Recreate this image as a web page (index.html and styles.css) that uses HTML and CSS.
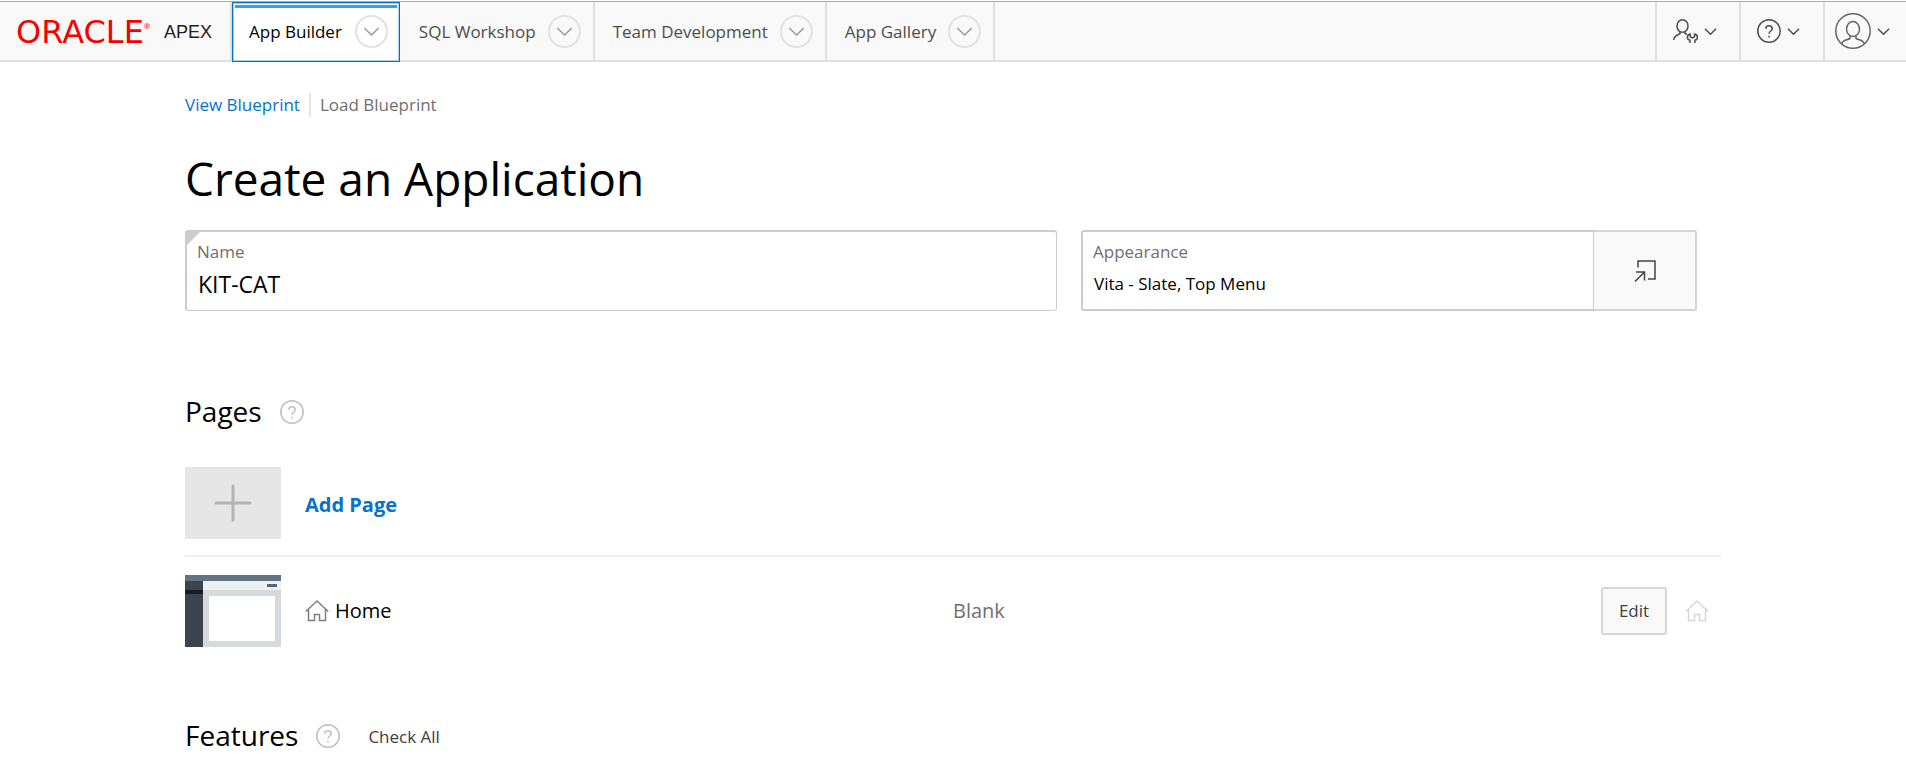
FILE: index.html
```html
<!DOCTYPE html>
<html lang="en">
<head>
<meta charset="utf-8">
<title>Create an Application</title>
<link rel="stylesheet" href="styles.css">
</head>
<body>
<svg class="sprite" aria-hidden="true">
  <symbol id="chevron" viewBox="0 0 18 10"><path d="M1 1l8 8 8-8"/></symbol>
  <symbol id="home" viewBox="0 0 24 22"><path d="M.8 11.5L12 1l11.2 10.5M3.500 9.500V20.500H9.500V14.500H14.500V20.500H20.500V9.500"/></symbol>
  <symbol id="help" viewBox="0 0 24 24"><circle cx="12" cy="12" r="11.200"/><path d="M8.800 9.800C8.800 7.800 10.200 6.800 12 6.800s3.200 1.100 3.200 2.900c0 2.200-3.200 2.400-3.200 5"/><path d="M12 16.800v1.800"/></symbol>
</svg>
<header class="header">
  <a class="logo" href="#"><span class="logo-brand">ORACLE</span><span class="logo-mark">®</span><span class="logo-product">APEX</span></a>
  <nav class="tabs">
    <div class="tab tab-active"><a href="#">App Builder</a><button class="tab-menu" aria-label="App Builder menu"><svg class="chevron"><use href="#chevron"/></svg></button></div>
    <div class="tab"><a href="#">SQL Workshop</a><button class="tab-menu" aria-label="SQL Workshop menu"><svg class="chevron"><use href="#chevron"/></svg></button></div>
    <div class="tab"><a href="#">Team Development</a><button class="tab-menu" aria-label="Team Development menu"><svg class="chevron"><use href="#chevron"/></svg></button></div>
    <div class="tab"><a href="#">App Gallery</a><button class="tab-menu" aria-label="App Gallery menu"><svg class="chevron"><use href="#chevron"/></svg></button></div>
  </nav>
  <div class="tools">
    <button class="tool" aria-label="Administration">
      <svg class="icon-admin" viewBox="0 0 25 24"><ellipse cx="9.500" cy="7" rx="5.500" ry="6.200"/><path d="M7 12.500v2.200C4 16 1 16.500.8 21M12 12.500v2l2 .8"/><path d="M17.300 14.800c-4 1.200-3.600 5.700-.4 6.400V24M21.500 14.800c4 1.200 3.600 5.700.4 6.400V24M17.300 14.800v3l2.100 1.200 2.100-1.200v-3"/></svg>
      <svg class="chevron-small"><use href="#chevron"/></svg>
    </button>
    <button class="tool" aria-label="Help">
      <svg class="icon-help"><use href="#help"/></svg>
      <svg class="chevron-small"><use href="#chevron"/></svg>
    </button>
    <button class="tool tool-account" aria-label="Account">
      <svg class="icon-account" viewBox="0 0 36 36"><circle cx="18" cy="18" r="17.200"/><ellipse cx="18" cy="16" rx="6.500" ry="7.500"/><path d="M15 22.500v3c-4 2-7.500 1.500-8.300 5.500M21 22.500v3c4 2 7.500 1.500 8.300 5.500"/></svg>
      <svg class="chevron-small"><use href="#chevron"/></svg>
    </button>
  </div>
</header>
<main class="content">
  <nav class="blueprints"><a class="link" href="#">View Blueprint</a><a class="link-muted" href="#">Load Blueprint</a></nav>
  <h1 class="title">Create an Application</h1>
  <form class="fields">
    <div class="field field-required">
      <label for="name">Name</label>
      <input class="input-large" id="name" type="text" value="KIT-CAT" required>
    </div>
    <div class="appearance">
      <div class="field">
        <label for="appearance">Appearance</label>
        <input id="appearance" type="text" value="Vita - Slate, Top Menu" readonly>
      </div>
      <button class="popup" type="button" aria-label="Set appearance"><svg class="icon-popup" viewBox="0 0 22 22"><path d="M4 7.500V1H21V19H14M1 21.500L10.500 12M2 12H10.500V20.500"/></svg></button>
    </div>
  </form>
  <section class="pages">
    <div class="heading"><h2>Pages</h2><button class="help" aria-label="Help on pages"><svg class="icon-help"><use href="#help"/></svg></button></div>
    <ul class="page-list">
      <li class="page-row">
        <svg class="thumb" viewBox="0 0 96 72"><rect width="96" height="72" fill="#e6e6e6"/><path d="M48 19V53M31 36H65" fill="none" stroke="#b3b3b3" stroke-width="3" stroke-linecap="round"/></svg>
        <a class="add-page" href="#">Add Page</a>
      </li>
      <li class="page-row">
        <svg class="thumb" viewBox="0 0 96 72"><rect width="96" height="72" fill="#d7dadd"/><rect x="18" y="6" width="78" height="9" fill="#eff1f1"/><rect width="96" height="6" fill="#627384"/><rect y="6" width="18" height="66" fill="#3b444e"/><rect y="15" width="18" height="4" fill="#191e23"/><rect x="24" y="21" width="66" height="45" fill="#fff"/><rect x="82" y="9" width="10" height="3" fill="#53677a"/></svg>
        <span class="page-name"><svg class="icon-home"><use href="#home"/></svg>Home</span>
        <span class="page-type">Blank</span>
        <span class="page-actions"><button class="edit">Edit</button><svg class="icon-home icon-faded"><use href="#home"/></svg></span>
      </li>
    </ul>
  </section>
  <section class="features">
    <div class="heading"><h2>Features</h2><button class="help" aria-label="Help on features"><svg class="icon-help"><use href="#help"/></svg></button><button class="check-all">Check All</button></div>
  </section>
</main>
</body>
</html>
```
FILE: styles.css
```css
* { box-sizing: border-box; }
body {
  margin: 0;
  background: #fff;
  color: #000;
  font: 17px/24px "Open Sans", "Noto Sans", sans-serif;
}
a { text-decoration: none; color: inherit; }
button { border: 0; background: none; padding: 0; color: inherit; font: inherit; }
svg { display: block; fill: none; stroke: currentColor; stroke-width: 1.5; overflow: visible; flex: none; }
.sprite { position: absolute; width: 0; height: 0; }

.header {
  display: flex;
  height: 61px;
  margin-top: 1px;
  border-top: 1px solid #aaaeaa;
  border-bottom: 2px solid #e0e0e0;
  background: #f9f9f9;
}
.logo { display: flex; align-items: center; width: 232px; padding: 2px 0 0 16px; border-right: 2px solid #e0e0e0; }
.logo-brand { color: #f80000; font: 32px/32px "DejaVu Sans", sans-serif; }
.logo-mark { align-self: flex-start; margin-top: 10px; color: #f80000; font-size: 8px; }
.logo-product { margin-left: auto; margin-right: 18px; color: #222; font: 18px/24px "Liberation Sans", sans-serif; }
.tabs { display: flex; }
.tab {
  display: flex;
  align-items: center;
  gap: 12px;
  padding: 0 12px 0 18px;
  border-right: 2px solid #e0e0e0;
  color: #4d4d4d;
}
.tab a { padding-top: 2px; }
.tab-active {
  gap: 13px;
  margin-bottom: -2px;
  margin-right: 1px;
  padding: 0 11px 2px 16px;
  border: 1px solid #0572ce;
  outline: 1px solid #a5cdf0;
  outline-offset: -2px;
  background: #fff linear-gradient(#3f9bec, #3f9bec) 2px 2px / calc(100% - 4px) 3px no-repeat;
  color: #000;
}
.tab-menu {
  display: grid;
  place-items: center;
  width: 33px;
  height: 33px;
  border: 2px solid #e2e2e2;
  border-radius: 50%;
  color: #999;
}
.chevron { width: 17px; height: 9px; }
.chevron-small { width: 13px; height: 7px; stroke-width: 2; }
.tools { display: flex; margin-left: auto; color: #4d4d4d; }
.tool { display: flex; align-items: center; gap: 6px; width: 84px; padding-left: 16px; border-left: 2px solid #e0e0e0; }
.tool-account { padding-left: 10px; width: 83px; }
.icon-admin { width: 25px; height: 24px; }
.icon-help { width: 24px; height: 24px; }
.icon-account { width: 36px; height: 36px; stroke: #666; }

.content { max-width: 1584px; margin: 0 auto; padding: 31px 24px 16px; }
.blueprints { display: flex; }
.link { padding-right: 9px; border-right: 2px solid #e6e6e6; color: #0572ce; }
.link-muted { padding-left: 9px; color: #707070; }
.title { margin: 28px 0 18px; font-size: 46px; font-weight: 400; line-height: 67px; }
.fields { display: grid; grid-template-columns: 7fr 5fr; }
.field {
  position: relative;
  display: flex;
  flex-direction: column;
  height: 81px;
  padding: 8px 10px;
  border: 1px solid #ccc;
  border-width: 2px 1px 1px 2px;
  border-radius: 3px;
}
.field label { color: #707070; font-size: 17px; }
.field input { width: 100%; height: 40px; padding: 1px 0 0 1px; border: 0; outline: 0; background: none; color: #000; font: 17px/24px "Open Sans", sans-serif; }
.field .input-large { font-size: 23px; }
.fields > * { margin-right: 24px; }
.field-required::before { content: ""; position: absolute; left: 0; top: 0; border: solid transparent; border-width: 13px 13px 0 0; border-top-color: #ccc; }
.appearance { display: grid; grid-template-columns: 1fr 103px; }
.appearance .field { border-width: 2px 1px 2px 2px; border-radius: 3px 0 0 3px; }
.popup { display: grid; place-items: center; border: 1px solid #d4d4d4; border-width: 2px 2px 2px 0; border-radius: 0 3px 3px 0; background: #f9f9f9; color: #444; }
.icon-popup { width: 22px; height: 22px; }

.heading { display: flex; align-items: center; }
.heading h2 { margin: 0; font-size: 28px; font-weight: 400; line-height: 40px; }
.help { margin: 2px 0 0 18px; color: #bfbfbf; }
.pages { margin-top: 80px; }
.page-list { margin: 18px 0 0; padding: 0; list-style: none; }
.page-row { display: grid; grid-template-columns: 96px 624px 1fr auto; align-items: center; padding: 18px 0 16px; column-gap: 24px; font-size: 20px; }
.page-row + .page-row { border-top: 2px solid #f0f0f0; }
.thumb { width: 96px; height: 72px; border-radius: 2px; stroke: none; }
.add-page { padding-top: 3px; color: #0572ce; font-weight: 700; }
.page-name { display: flex; align-items: center; gap: 6px; }
.icon-home { width: 24px; height: 22px; color: #808080; }
.page-type { color: #707070; }
.page-actions { display: flex; align-items: center; gap: 18px; margin-right: 12px; }
.icon-faded { color: #d8d8d8; }
.edit { width: 66px; height: 48px; border: 2px solid #d6d6d6; border-radius: 3px; background: #f9f9f9; color: #404040; font-size: 17px; }
.features { margin-top: 52px; }
.check-all { margin: 4px 0 0 28px; color: #404040; font-size: 17px; }
```
